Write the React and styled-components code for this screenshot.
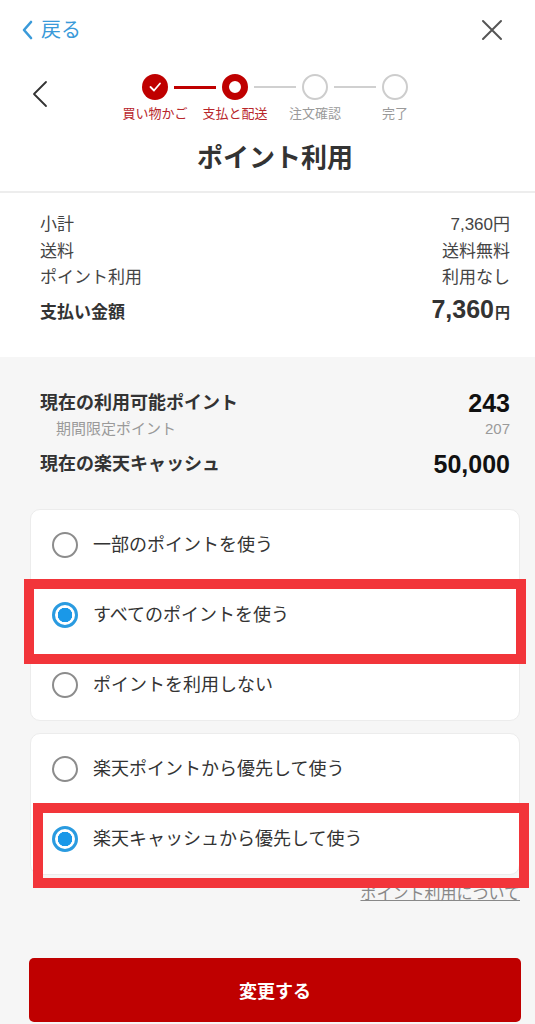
import React from "react";
import styled, { createGlobalStyle } from "styled-components";

const GlobalStyle = createGlobalStyle`
  html, body {
    margin: 0;
    padding: 0;
    background: #f6f6f6;
  }
  body {
    font-family: "Liberation Sans", "Noto Sans CJK JP", sans-serif;
    color: #333;
  }
  * {
    box-sizing: border-box;
  }
`;

const steps = [
  { label: "買い物かご", state: "done" },
  { label: "支払と配送", state: "current" },
  { label: "注文確認", state: "todo" },
  { label: "完了", state: "todo" },
];

const summaryRows = [
  { label: "小計", value: "7,360円" },
  { label: "送料", value: "送料無料" },
  { label: "ポイント利用", value: "利用なし" },
];

const App = () => {
  return (
    <Page>
      <GlobalStyle />
      <Header>
        <TopBar>
          <BackLink>
            <svg width="11" height="20" viewBox="0 0 11 20">
              <path d="M9 2 L2 10 L9 18" fill="none" stroke="#3a9ad9" strokeWidth="2.6" strokeLinecap="round" strokeLinejoin="round" />
            </svg>
            <span>戻る</span>
          </BackLink>
          <CloseButton>
            <svg width="22" height="22" viewBox="0 0 22 22">
              <path d="M2 2 L20 20 M20 2 L2 20" stroke="#555" strokeWidth="2" strokeLinecap="round" />
            </svg>
          </CloseButton>
        </TopBar>

        <StepRow>
          <StepBack>
            <svg width="16" height="28" viewBox="0 0 16 28">
              <path d="M14 2 L2 14 L14 26" fill="none" stroke="#333" strokeWidth="1.8" strokeLinecap="round" strokeLinejoin="round" />
            </svg>
          </StepBack>
          <Stepper>
            <DotTrack>
              {steps.map((step, i) => (
                <React.Fragment key={step.label}>
                  {i > 0 && <Connector $active={step.state !== "todo"} />}
                  <Dot $state={step.state}>
                    {step.state === "done" && (
                      <svg width="14" height="14" viewBox="0 0 14 14">
                        <path d="M2.5 7 L6 10.5 L12 3.5" fill="none" stroke="#fff" strokeWidth="1.8" strokeLinecap="round" strokeLinejoin="round" />
                      </svg>
                    )}
                  </Dot>
                </React.Fragment>
              ))}
            </DotTrack>
            <StepLabels>
              {steps.map((step) => (
                <StepLabel key={step.label} $active={step.state !== "todo"}>
                  {step.label}
                </StepLabel>
              ))}
            </StepLabels>
          </Stepper>
        </StepRow>

        <Title>ポイント利用</Title>
      </Header>

      <Summary>
        {summaryRows.map((row) => (
          <SummaryRow key={row.label}>
            <span>{row.label}</span>
            <span>{row.value}</span>
          </SummaryRow>
        ))}
        <TotalRow>
          <span>支払い金額</span>
          <TotalValue>
            7,360<small>円</small>
          </TotalValue>
        </TotalRow>
      </Summary>

      <Body>
        <Balance>
          <BalanceRow>
            <span>現在の利用可能ポイント</span>
            <BigNumber>243</BigNumber>
          </BalanceRow>
          <SubRow>
            <span>期間限定ポイント</span>
            <span>207</span>
          </SubRow>
          <BalanceRow $gap>
            <span>現在の楽天キャッシュ</span>
            <BigNumber>50,000</BigNumber>
          </BalanceRow>
        </Balance>

        <OptionCard>
          <OptionRow>
            <Radio />
            <OptionText>一部のポイントを使う</OptionText>
          </OptionRow>
          <OptionRow>
            <Radio $checked />
            <OptionText>すべてのポイントを使う</OptionText>
            <Highlight $left={-7} $right={-7} />
          </OptionRow>
          <OptionRow>
            <Radio />
            <OptionText>ポイントを利用しない</OptionText>
          </OptionRow>
        </OptionCard>

        <OptionCard $second>
          <OptionRow>
            <Radio />
            <OptionText>楽天ポイントから優先して使う</OptionText>
          </OptionRow>
          <OptionRow>
            <Radio $checked />
            <OptionText>楽天キャッシュから優先して使う</OptionText>
            <Highlight $left={2} $right={-10} />
          </OptionRow>
        </OptionCard>

        <HelpLink href="#">ポイント利用について</HelpLink>

        <SubmitButton>変更する</SubmitButton>
      </Body>
    </Page>
  );
};

export default App;

const Page = styled.div`
  width: 535px;
  min-height: 1024px;
  background: #f6f6f6;
  overflow: hidden;
`;

const Header = styled.header`
  background: #fff;
  padding: 0 0 16px 15px;
  border-bottom: 2px solid #ededed;
`;

const TopBar = styled.div`
  height: 60px;
  display: flex;
  align-items: center;
  justify-content: space-between;
  padding: 0 32px 0 7px;
`;

const BackLink = styled.div`
  display: flex;
  align-items: center;
  gap: 8px;
  color: #3a9ad9;
  font-size: 20px;
  line-height: 24px;
`;

const CloseButton = styled.div`
  width: 22px;
  height: 22px;
  display: flex;
`;

const StepRow = styled.div`
  display: grid;
  grid-template-columns: 40px 1fr 40px;
  align-items: center;
  padding-top: 14px;
`;

const StepBack = styled.div`
  display: flex;
  padding-left: 17px;
  margin-top: -10px;
`;

const Stepper = styled.div`
  display: flex;
  flex-direction: column;
  align-items: center;
`;

const DotTrack = styled.div`
  display: flex;
  align-items: center;
`;

const Dot = styled.div`
  width: 26px;
  height: 26px;
  border-radius: 50%;
  display: flex;
  align-items: center;
  justify-content: center;
  background: ${({ $state }) => ($state === "done" ? "#bf0000" : "#fff")};
  border: ${({ $state }) =>
    $state === "current"
      ? "7px solid #bf0000"
      : $state === "done"
      ? "none"
      : "2px solid #cdcdcd"};
`;

const Connector = styled.div`
  width: 42px;
  height: ${({ $active }) => ($active ? "3px" : "2px")};
  margin: 0 6px;
  background: ${({ $active }) => ($active ? "#bf0000" : "#d0d0d0")};
`;

const StepLabels = styled.div`
  display: grid;
  grid-template-columns: repeat(4, 80px);
  margin-top: 5px;
`;

const StepLabel = styled.div`
  text-align: center;
  font-size: 13px;
  line-height: 18px;
  color: ${({ $active }) => ($active ? "#b8262b" : "#9a9a9a")};
`;

const Title = styled.h1`
  margin: 18px 0 0;
  text-align: center;
  font-size: 26px;
  line-height: 34px;
  font-weight: bold;
  color: #333;
`;

const Summary = styled.section`
  background: #fff;
  padding: 19px 25px 27px 40px;
`;

const SummaryRow = styled.div`
  display: flex;
  justify-content: space-between;
  font-size: 17px;
  line-height: 26.5px;
  color: #444;
`;

const TotalRow = styled.div`
  display: flex;
  justify-content: space-between;
  align-items: baseline;
  font-size: 17px;
  line-height: 34px;
  font-weight: bold;
  color: #333;
`;

const TotalValue = styled.span`
  font-size: 25px;
  small {
    font-size: 15px;
    margin-left: 1px;
  }
`;

const Body = styled.main`
  padding: 31px 15px 30px 30px;
`;

const Balance = styled.div`
  padding: 0 10px;
`;

const BalanceRow = styled.div`
  display: flex;
  justify-content: space-between;
  align-items: center;
  margin-top: ${({ $gap }) => ($gap ? "9px" : "0")};
  font-size: 18px;
  line-height: 30px;
  font-weight: bold;
  color: #333;
`;

const BigNumber = styled.span`
  font-size: 25px;
  color: #111;
`;

const SubRow = styled.div`
  display: flex;
  justify-content: space-between;
  padding-left: 16px;
  font-size: 15px;
  line-height: 22px;
  color: #9a9a9a;
`;

const OptionCard = styled.div`
  margin-top: ${({ $second }) => ($second ? "12px" : "30px")};
  background: #fff;
  border: 1px solid #ececec;
  border-radius: 10px;
`;

const OptionRow = styled.div`
  position: relative;
  height: 70px;
  display: flex;
  align-items: center;
  gap: 15px;
  padding-left: 21px;
`;

const Radio = styled.span`
  flex: none;
  width: 26px;
  height: 26px;
  border-radius: 50%;
  border: ${({ $checked }) => ($checked ? "3px solid #2a9be0" : "2.5px solid #8c8c8c")};
  background: ${({ $checked }) =>
    $checked ? "radial-gradient(circle, #1a98e8 0 7px, #fff 7.5px)" : "#fff"};
`;

const OptionText = styled.span`
  font-size: 18px;
  line-height: 24px;
  color: #333;
`;

const Highlight = styled.span`
  position: absolute;
  top: -1px;
  bottom: -14px;
  left: ${({ $left }) => $left}px;
  right: ${({ $right }) => $right}px;
  border: 10px solid #f2353a;
  pointer-events: none;
  z-index: 2;
`;

const HelpLink = styled.a`
  display: block;
  margin-top: 9px;
  text-align: right;
  font-size: 16px;
  line-height: 20px;
  color: #888;
  text-decoration: underline;
`;

const SubmitButton = styled.button`
  display: block;
  width: 492px;
  height: 64px;
  margin: 54px 0 0 -1px;
  border: none;
  border-radius: 5px;
  background: #bf0000;
  color: #fff;
  font-family: inherit;
  font-size: 18px;
  font-weight: bold;
`;
